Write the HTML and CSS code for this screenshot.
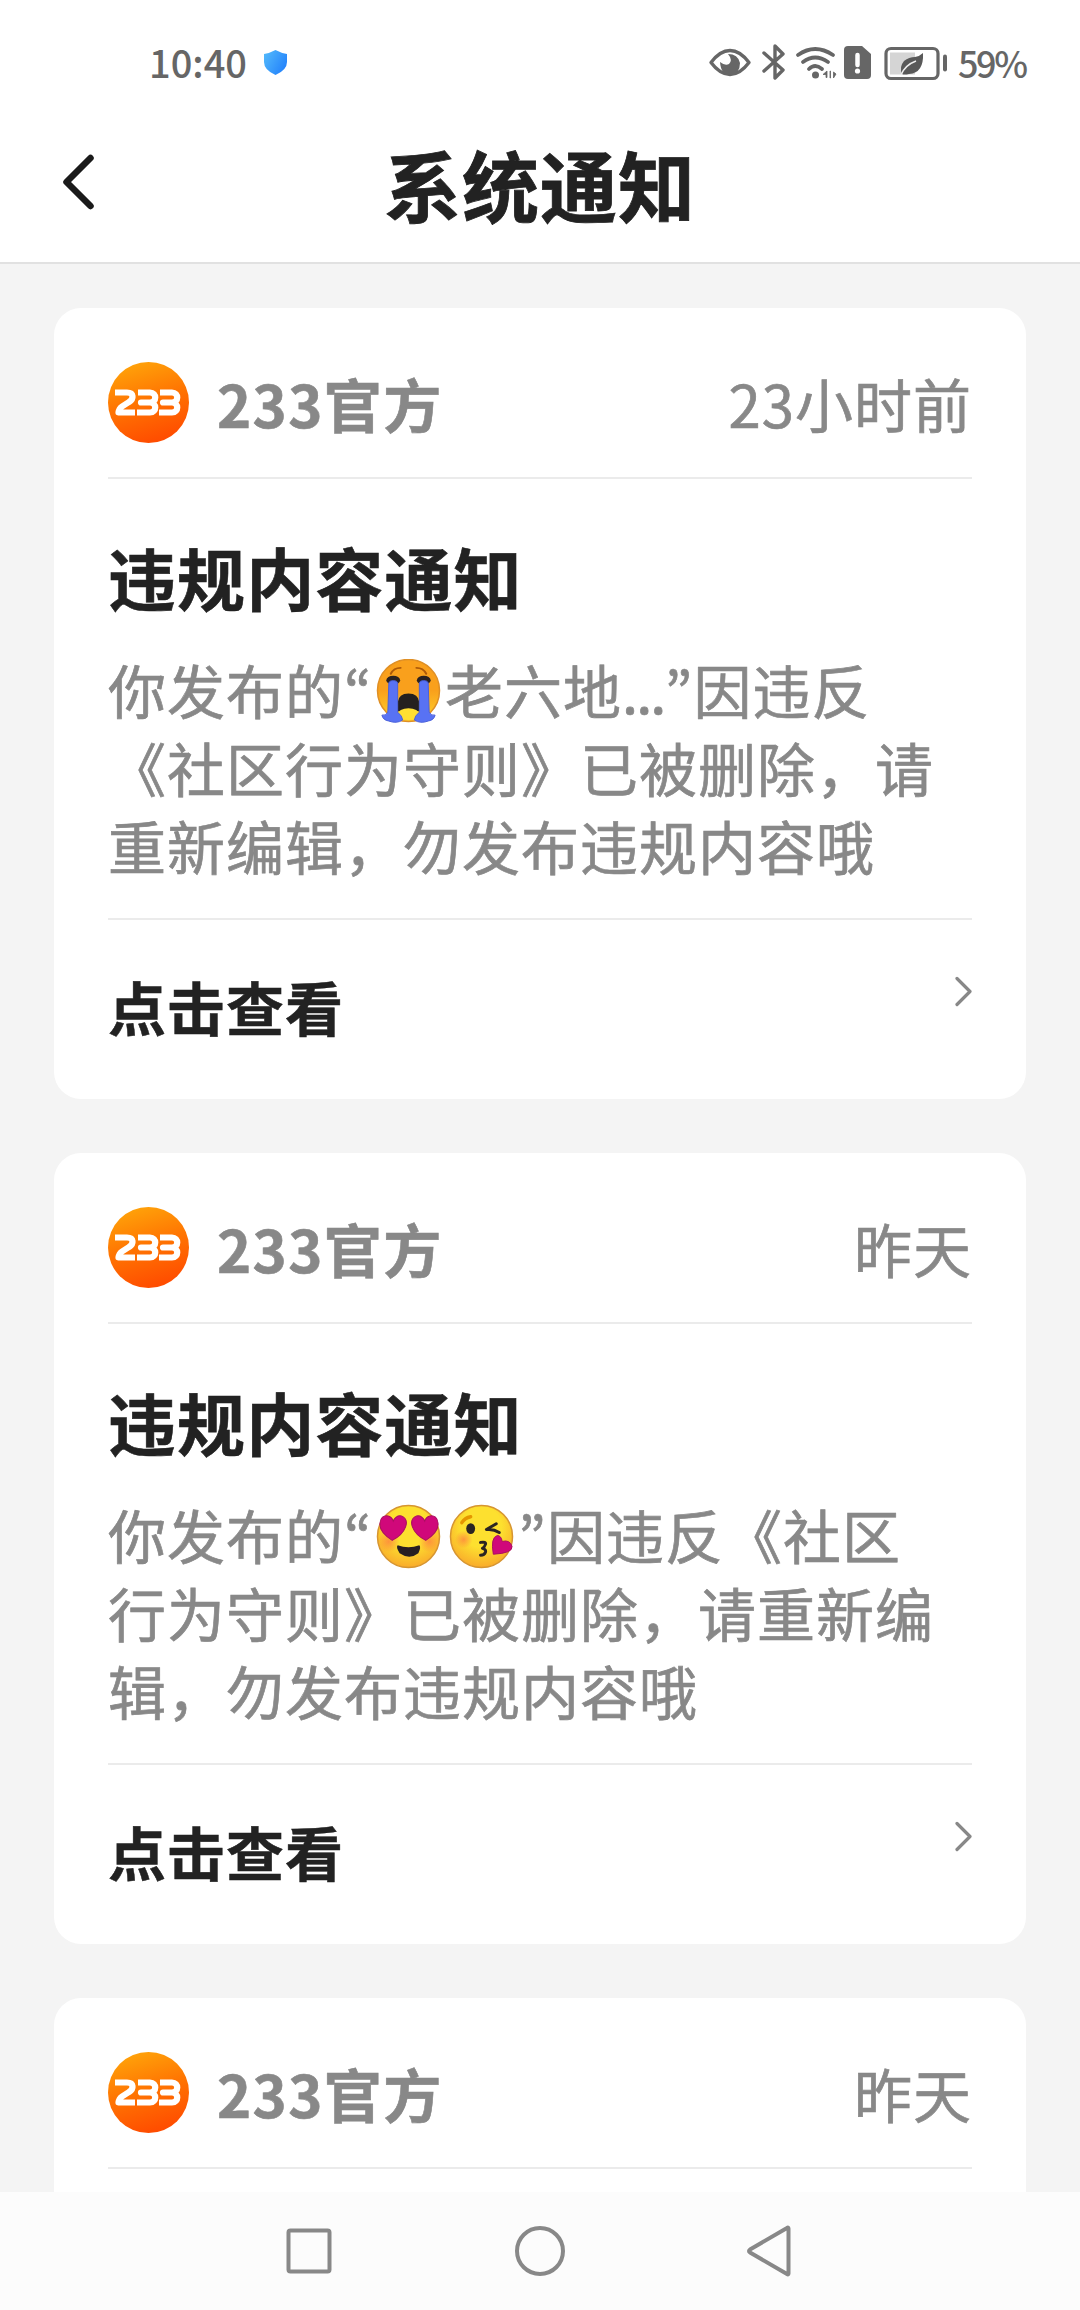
FILE: index.html
```html
<!DOCTYPE html>
<html lang="zh-CN">
<head>
<meta charset="utf-8">
<title>系统通知</title>
<link rel="stylesheet" href="styles.css">
</head>
<body>
<svg class="defs" width="0" height="0" aria-hidden="true">
  <defs>
    <linearGradient id="orange" x1="0.2" y1="0" x2="0.5" y2="1">
      <stop offset="0" stop-color="#ffa60a"/><stop offset="0.5" stop-color="#ff7502"/><stop offset="1" stop-color="#ff4d00"/>
    </linearGradient>
    <linearGradient id="cry" x1="0" y1="0" x2="0" y2="1">
      <stop offset="0.5" stop-color="#f9a01c"/><stop offset="1" stop-color="#ffd42c"/>
    </linearGradient>
    <radialGradient id="face" cx="0.5" cy="0.35" r="0.65">
      <stop offset="0.5" stop-color="#fde02f"/><stop offset="1" stop-color="#f9ab2b"/>
    </radialGradient>
    <radialGradient id="blush">
      <stop offset="0" stop-color="#ff7043" stop-opacity=".65"/><stop offset="1" stop-color="#ff7043" stop-opacity="0"/>
    </radialGradient>
    <linearGradient id="blue" x1="0" y1="0" x2="1" y2="0.6">
      <stop offset="0" stop-color="#55bcfb"/><stop offset="1" stop-color="#2584fb"/>
    </linearGradient>
    <symbol id="logo" viewBox="0 0 81 81">
      <circle cx="40.500" cy="40.500" r="40.500" fill="url(#orange)"/>
      <g fill="none" stroke="#fff" stroke-width="6.200" stroke-linejoin="round">
        <path d="M7 30.500H19C26 30.500 26 37 21 40L14 44.500Q11 46.500 10.500 50.500H27"/>
        <path d="M30 30.500H42C49 30.500 49 40.500 42 40.500H33H42C49 40.500 49 50.500 42 50.500H29"/>
        <path d="M52 30.500H64C71 30.500 71 40.500 64 40.500H55H64C71 40.500 71 50.500 64 50.500H51"/>
      </g>
    </symbol>
    <symbol id="sob" viewBox="0 0 66 66">
      <circle cx="33" cy="32" r="31.500" fill="url(#cry)" stroke="#df8f25" stroke-width="1.500"/>
      <path d="M15 15Q18 9 25 9M41 9Q48 9 51 15" fill="none" stroke="#ad5a09" stroke-width="2" stroke-linecap="round"/>
      <ellipse cx="17.500" cy="21.500" rx="7" ry="4.500" fill="#2b2220"/><ellipse cx="48.500" cy="21.500" rx="7" ry="4.500" fill="#2b2220"/>
      <path d="M22 53V44Q23 35 33 35T44 44V53Z" fill="#25201f"/>
      <ellipse cx="33" cy="56" rx="11" ry="6" fill="#ffdf32"/>
      <path d="M13 25Q13 22 17.500 22T22 25V54Q27 58 27 62Q21 66 13 63Q7 62 6 57Q10 58 12 54ZM44 25Q44 22 48.500 22T53 25L54 54Q56 58 60 57Q59 62 53 63Q45 66 39 62Q39 58 44 54Z" fill="#5872f4" stroke="#4960d9"/>
    </symbol>
    <symbol id="heart" viewBox="0 0 28 26">
      <path d="M13 25Q0 17 1 8Q2 0 9 1Q13 2 14 6Q17 0 22 1Q29 4 26 12Q23 20 13 25Z" fill="#d0087a" stroke="#a90e5f"/>
    </symbol>
    <symbol id="love" viewBox="0 0 66 66">
      <circle cx="33" cy="33" r="31.500" fill="url(#face)" stroke="#d69531" stroke-width="1.500"/>
      <circle cx="13" cy="38" r="11" fill="url(#blush)"/><circle cx="54" cy="38" r="11" fill="url(#blush)"/>
      <use href="#heart" x="3" y="11" width="29" height="27"/>
      <use href="#heart" x="0" y="0" width="29" height="27" transform="translate(64 11) scale(-1 1)"/>
      <path d="M22 42Q33 46 44 42Q46 44 43 50Q34 57 24 50Q20 44 22 42Z" fill="#271f22"/>
    </symbol>
    <symbol id="kiss" viewBox="0 0 66 66">
      <circle cx="33" cy="33" r="31.500" fill="url(#face)" stroke="#d69531" stroke-width="1.500"/>
      <circle cx="15" cy="36" r="9" fill="url(#blush)"/>
      <path d="M13 19Q16 14 22 13" fill="none" stroke="#e59600" stroke-width="3.500" stroke-linecap="round"/>
      <ellipse cx="22" cy="25" rx="4.500" ry="5.500" fill="#2b2523"/>
      <path d="M48 20L38 26Q45 25 51 29M32 39Q38 38 37 41T34 45Q38 46 37 49T32 52" fill="none" stroke="#2b2523" stroke-width="3" stroke-linecap="round" stroke-linejoin="round"/>
      <path d="M45 51Q42 34 49 32Q53 32 54 38Q62 36 64 43Q65 50 45 51Z" fill="#d0087a" stroke="#a90e5f"/>
    </symbol>
    <symbol id="more" viewBox="0 0 18 34">
      <path d="M3 3.500L16 16.500L3 29.500" fill="none" stroke="#888" stroke-width="3.200" stroke-linecap="round" stroke-linejoin="round"/>
    </symbol>
  </defs>
</svg>

<div class="screen">
  <div class="status">
    <span class="clock">10:40</span>
    <svg class="shield" width="27" height="27" viewBox="0 0 27 27"><path d="M13.500 1Q19 4 25 5V13Q25 21 13.500 26Q2 21 2 13V5Q8 4 13.500 1Z" fill="url(#blue)"/></svg>
    <svg class="indicators" width="240" height="40" viewBox="0 0 240 40">
      <g fill="none" stroke="#666" stroke-width="3.400" stroke-linecap="round" stroke-linejoin="round">
        <path d="M3 21.500Q12 9.500 22 9.500T41 21.500Q32 33.500 22 33.500T3 21.500Z"/>
        <path d="M56 12L75 29L67 37V5L75 13L56 30"/>
        <path d="M90 14Q107 2 125 14M95 21Q107 12 120 21M101 28Q107 22 114 28" stroke-width="3.700"/>
        <rect x="178" y="7.500" width="52" height="30" rx="5" stroke-width="3.200"/>
        <path d="M237 15.500V28.500" stroke-width="4"/>
      </g>
      <path d="M12 21Q13 34 22 34Q32 33 32 22Q30 13 20 13Q25 19 21 23Q17 25 12 21Z" fill="#666"/>
      <circle cx="107.500" cy="34" r="3.500" fill="#666"/>
      <path d="M115 33.500L119 30V36.500H118V33.500ZM122 30H122.500V37H122ZM125.500 31V37L128 33Z" fill="#666" stroke="#666" stroke-width=".8"/>
      <path d="M140 5H154L163 13V34Q163 38 159 38H140Q136 38 136 34V9Q136 5 140 5Z" fill="#666"/>
      <path d="M149.500 14V24" stroke="#fff" stroke-width="4.500" stroke-linecap="round"/><circle cx="149.500" cy="30" r="2.600" fill="#fff"/>
      <path d="M182 11.500H207V33.500H182Z" fill="#d5d5d5"/>
      <path d="M215 12Q216 32 201 33Q196 34 194 33Q191 26 196 20Q201 16 207 16Q212 15 215 12Z" fill="#595959"/>
      <path d="M193 34Q197 24 208 20" fill="none" stroke="#eee" stroke-width="1.500"/>
    </svg>
    <span class="percent">59%</span>
  </div>
  <header class="titlebar">
    <svg class="back" width="40" height="56" viewBox="0 0 40 56"><path d="M32.500 4L8.500 28L32.500 52" fill="none" stroke="#1a1a1a" stroke-width="6.500" stroke-linecap="round" stroke-linejoin="round"/></svg>
    <h1 class="page-title">系统通知</h1>
  </header>

  <main class="feed">
    <article class="card">
      <div class="card-head">
        <svg class="avatar"><use href="#logo"/></svg>
        <span class="sender">233官方</span><time class="time">23小时前</time>
      </div>
      <h2 class="subject">违规内容通知</h2>
      <p class="message">你发布的<span class="quote open">“</span><svg class="emoji"><use href="#sob"/></svg>老六地<span class="dots">...</span><span class="quote close">”</span>因违反<br>《社区行为守则》已被删除，请<br>重新编辑，勿发布违规内容哦</p>
      <div class="card-foot"><span>点击查看</span><svg class="more"><use href="#more"/></svg></div>
    </article>
    <article class="card">
      <div class="card-head">
        <svg class="avatar"><use href="#logo"/></svg>
        <span class="sender">233官方</span><time class="time">昨天</time>
      </div>
      <h2 class="subject">违规内容通知</h2>
      <p class="message">你发布的<span class="quote open">“</span><svg class="emoji"><use href="#love"/></svg><svg class="emoji"><use href="#kiss"/></svg><span class="quote close">”</span>因违反《社区<br>行为守则》已被删除，请重新编<br>辑，勿发布违规内容哦</p>
      <div class="card-foot"><span>点击查看</span><svg class="more"><use href="#more"/></svg></div>
    </article>
    <article class="card">
      <div class="card-head">
        <svg class="avatar"><use href="#logo"/></svg>
        <span class="sender">233官方</span><time class="time">昨天</time>
      </div>
    </article>
  </main>

  <nav class="navbar">
    <svg width="52" height="54" viewBox="0 0 52 54"><rect x="5.500" y="6.500" width="41" height="41" rx="2"/></svg>
    <svg width="54" height="54" viewBox="0 0 54 54"><circle cx="28" cy="27" r="23"/></svg>
    <svg width="52" height="54" viewBox="0 0 52 54"><path d="M45.500 4.500V49.500Q45.500 51 44 50L7 28.500Q5 27 7 25.500L44 4Q45.500 3 45.500 4.500Z"/></svg>
  </nav>
</div>
</body>
</html>
```
FILE: styles.css
```css
* { box-sizing: border-box; }
body {
  margin: 0;
  background: #f4f4f4;
  color: #222;
  font-family: "Noto Sans CJK SC", sans-serif;
}
h1, h2, p { margin: 0; }
.defs { display: block; }
.screen {
  display: flex;
  flex-direction: column;
  width: 1080px;
  height: 2310px;
  overflow: hidden;
}
.status {
  display: flex;
  align-items: center;
  flex: none;
  height: 122px;
  padding: 0 54px 0 149px;
  background: #fff;
  color: #666;
  font-size: 38px;
  font-weight: 500;
  line-height: 56px;
}
.clock { margin-top: 2px; }
.shield { margin-left: 15px; margin-top: 2px; }
.indicators { margin-left: auto; margin-right: 10px; }
.percent { margin-top: 2px; font-size: 36px; width: 68px; letter-spacing: -2.4px; }
.titlebar {
  display: grid;
  grid-template-columns: 60px 1fr 60px;
  align-items: center;
  flex: none;
  height: 142px;
  padding: 0 58px 20px;
  background: #fff;
  border-bottom: 2px solid #e1e1e1;
}
.page-title {
  padding-top: 4px;
  font-size: 77px;
  font-weight: 700;
  line-height: 100px;
  letter-spacing: 1px;
  text-align: center;
  -webkit-text-stroke: 0.8px;
}
.feed {
  display: flex;
  flex-direction: column;
  gap: 54px;
  flex: 1;
  min-height: 0;
  padding: 44px 54px 0;
  overflow: hidden;
}
.card {
  flex: none;
  height: 791px;
  padding: 0 54px;
  background: #fff;
  border-radius: 27px;
}
.card-head {
  display: flex;
  align-items: center;
  height: 171px;
  padding-top: 20px;
  border-bottom: 2px solid #ebebeb;
  color: #888;
  font-size: 58px;
  line-height: 80px;
}
.avatar { width: 81px; height: 81px; }
.sender {
  margin-left: 28px;
  font-weight: 700;
  letter-spacing: 1.4px;
  -webkit-text-stroke: 0.6px;
}
.time {
  margin-left: auto;
  letter-spacing: 1px;
  -webkit-text-stroke: 0.7px;
}
.subject {
  padding-top: 48px;
  font-size: 68px;
  font-weight: 700;
  line-height: 100px;
  letter-spacing: 1.1px;
  -webkit-text-stroke: 0.6px;
}
.message {
  height: 293px;
  padding-top: 23px;
  border-bottom: 2px solid #ebebeb;
  color: #888;
  font-size: 58px;
  line-height: 78px;
  letter-spacing: 1px;
  white-space: nowrap;
  -webkit-text-stroke: 0.7px;
}
.quote {
  display: inline-block;
  width: 29px;
  height: 78px;
  font-family: "Noto Sans CJK KR", sans-serif;
  vertical-align: top;
  text-align: center;
}
.open { width: 28px; }
.emoji {
  width: 65px;
  height: 65px;
  margin: 9px 4px 0;
  vertical-align: top;
}
.dots { letter-spacing: -2px; }
.card-foot {
  display: flex;
  justify-content: space-between;
  padding-top: 46px;
  font-size: 58px;
  font-weight: 700;
  line-height: 80px;
  letter-spacing: 1px;
  -webkit-text-stroke: 0.5px;
}
.more { width: 18px; height: 34px; margin-top: 9px; }
.navbar {
  display: flex;
  align-items: center;
  justify-content: space-between;
  flex: none;
  height: 118px;
  padding: 0 285px 0 283px;
  background: #fcfcfc;
}
.navbar svg {
  fill: none;
  stroke: #888;
  stroke-width: 4;
  stroke-linejoin: round;
}
```
